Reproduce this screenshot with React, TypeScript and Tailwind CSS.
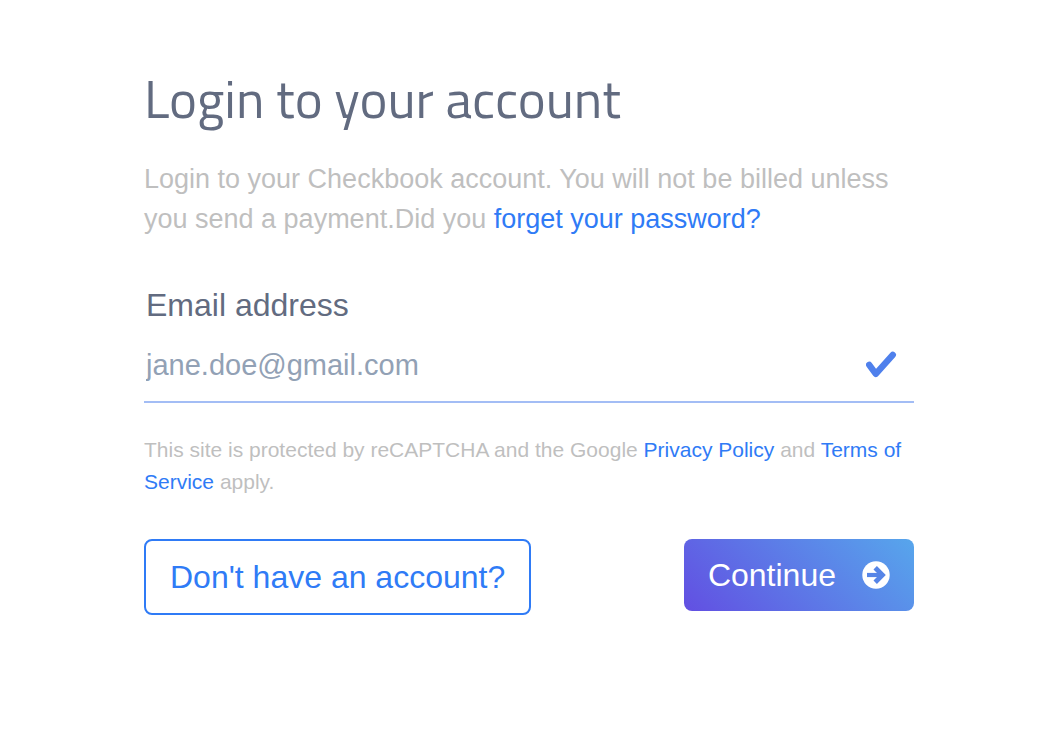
function CheckIcon() {
  return (
    <svg width="32" height="32" viewBox="0 0 32 32" fill="none" aria-hidden="true">
      <path
        d="M3.2 17.8L9.8 26.8L26.8 7.8"
        stroke="#4f80ec"
        strokeWidth="6.4"
        strokeLinecap="round"
        strokeLinejoin="round"
      />
    </svg>
  )
}

function ArrowCircleIcon() {
  return (
    <svg width="28" height="28" viewBox="0 0 28 28" fill="none" aria-hidden="true">
      <circle cx="14" cy="14" r="13.7" fill="white" />
      <path d="M5 14H19" stroke="#5685e7" strokeWidth="4.2" />
      <path d="M13.2 6.8L20.4 14L13.2 21.2" stroke="#5685e7" strokeWidth="4.8" />
    </svg>
  )
}

export default function App() {
  return (
    <main className="min-h-screen bg-white pt-[69px] pr-[142px] pb-16 pl-36 font-['Liberation_Sans',Arial,sans-serif] text-[#bfbfbf]">
      <h1 className="font-['Titillium_Web','Open_Sans',sans-serif] text-[53px] leading-[60px] font-normal text-[#626b80]">
        Login to your account
      </h1>

      <p className="mt-[30px] text-[27px] leading-10">
        Login to your Checkbook account. You will not be billed unless you send a payment.Did you{" "}
        <a href="#forgot" className="text-[#2f7bf6]">
          forget your password?
        </a>
      </p>

      <form onSubmit={(e) => e.preventDefault()}>
        {/* Email field */}
        <label htmlFor="email" className="mt-[46px] block pl-0.5 text-[32px] leading-10 text-[#626b80]">
          Email address
        </label>
        <div className="flex items-center border-b-2 border-[#a3bdf5] pr-4">
          <input
            id="email"
            type="email"
            placeholder="jane.doe@gmail.com"
            className="h-[76px] min-w-0 flex-1 pt-1 pl-0.5 text-[29px] outline-none placeholder:text-[#92a1b5]"
          />
          <CheckIcon />
        </div>

        <p className="mt-[31px] text-[21px] leading-8">
          This site is protected by reCAPTCHA and the Google{" "}
          <a href="#privacy" className="text-[#2f7bf6]">
            Privacy Policy
          </a>{" "}
          and{" "}
          <a href="#terms" className="text-[#2f7bf6]">
            Terms of Service
          </a>{" "}
          apply.
        </p>

        {/* Actions */}
        <div className="mt-[41px] flex items-start justify-between">
          <button
            type="button"
            className="h-[76px] rounded-lg border-2 border-[#2f7bf6] px-6 text-[32px] text-[#2f7bf6]"
          >
            Don't have an account?
          </button>
          <button
            type="submit"
            className="flex h-[72px] items-center gap-[26px] rounded-lg bg-[linear-gradient(45deg,#624fe2,#57a6ec)] px-6 text-[32px] text-white"
          >
            Continue
            <ArrowCircleIcon />
          </button>
        </div>
      </form>
    </main>
  )
}
